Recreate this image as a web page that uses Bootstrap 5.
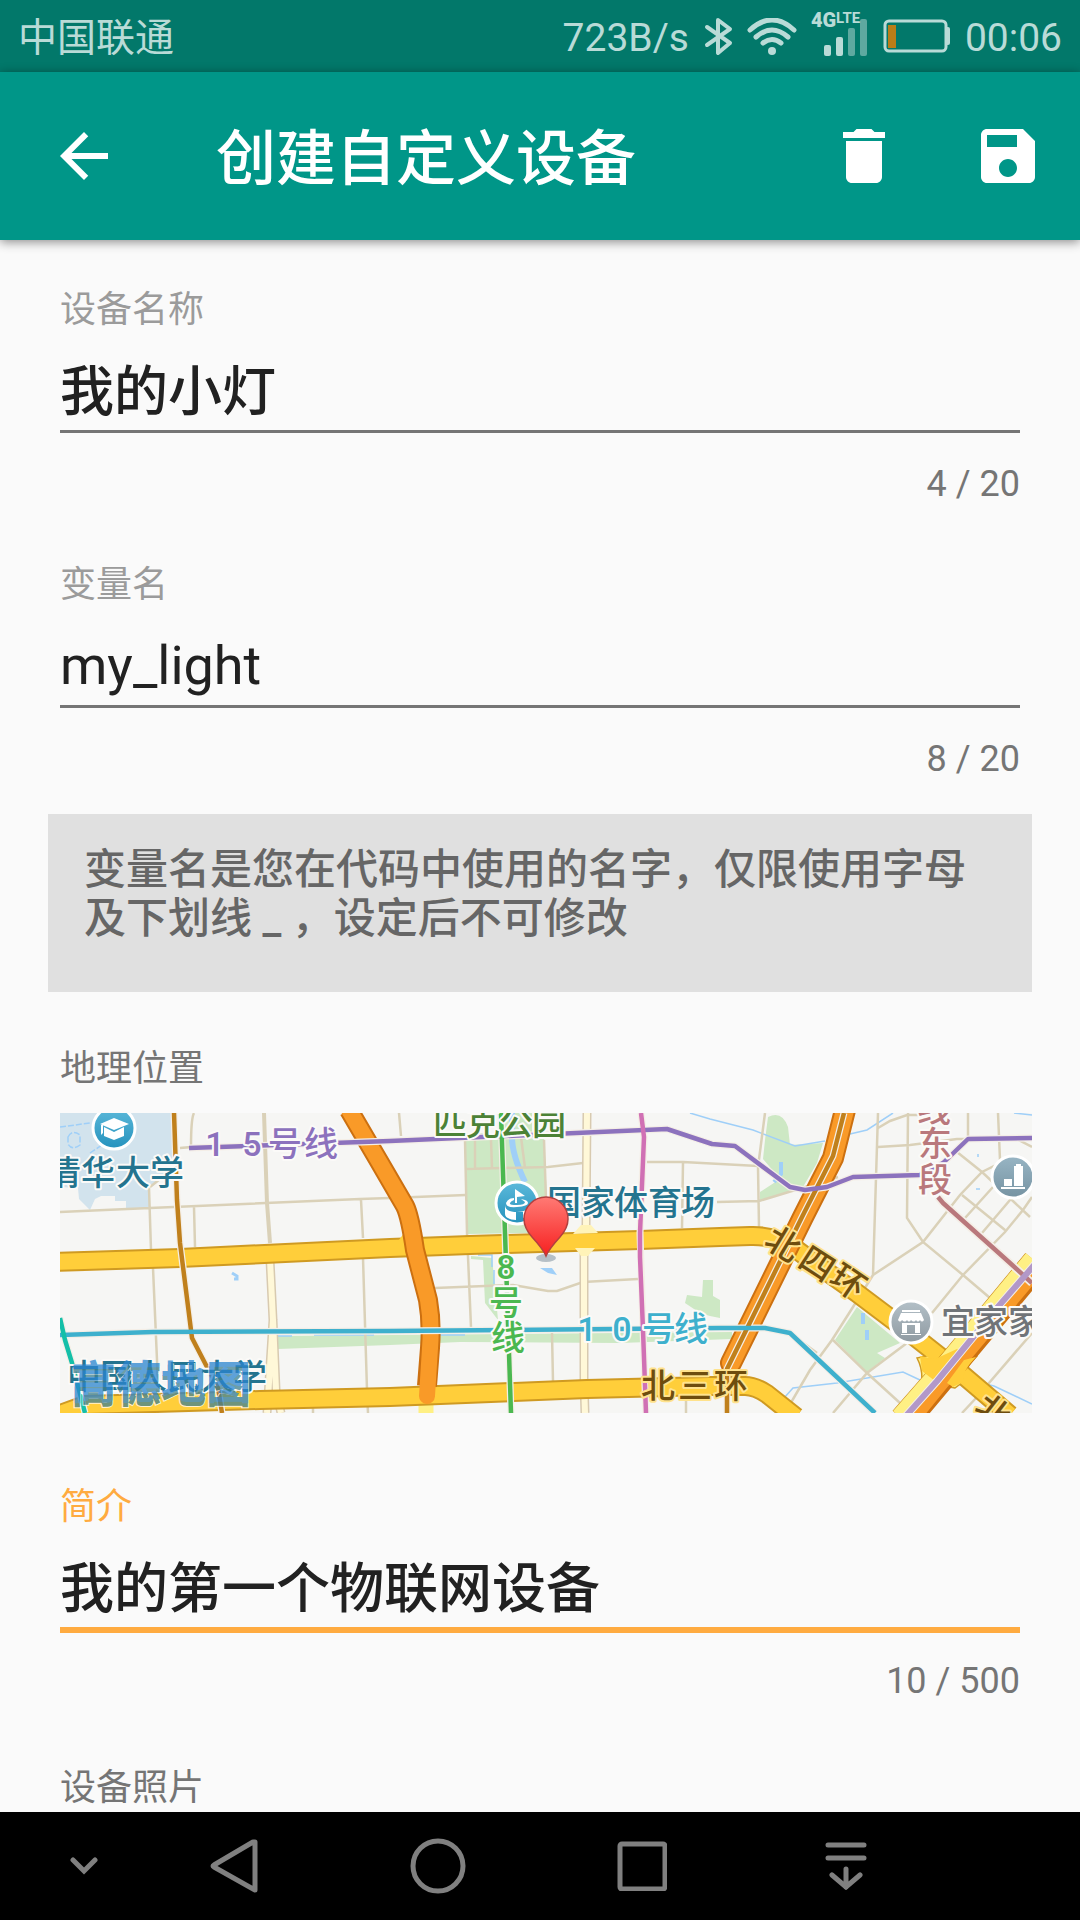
<!DOCTYPE html>
<html lang="zh-CN">
<head>
<meta charset="utf-8">
<meta name="viewport" content="width=device-width, initial-scale=1">
<title>创建自定义设备</title>
<link href="https://cdn.jsdelivr.net/npm/bootstrap@5.3.0/dist/css/bootstrap.min.css" rel="stylesheet">
<style>
  body { font-family: Roboto, "Noto Sans CJK SC", sans-serif; background: #fafafa; color: #212121; }
  svg { display: block; flex: none; }
  .status-bar { height: 72px; padding: 4px 18px 0; background: #02786a; color: #b9dbd7; font-size: 39px; line-height: 68px; }
  .status-icons { gap: 14px; }
  .app-bar { height: 168px; padding: 0 36px 0 48px; background: #009688; color: #fff; box-shadow: 0 2px 10px rgba(0,0,0,.45); z-index: 1; }
  .app-bar h1 { font-size: 60px; font-weight: 500; line-height: 72px; margin-left: 96px; padding-top: 8px; }
  .app-actions { gap: 72px; }
  .icon-btn { width: 72px; height: 72px; padding: 0; border: 0; color: #fff; }
  .form-area { padding: 49px 48px 3px; }
  .field { padding: 0 12px; }
  .caption { display: block; margin: 0; font-size: 36px; line-height: 42px; color: #757575; }
  .field .caption { color: #9b9b9b; }
  .field .line-input { padding: 19px 0 0; border: 0; border-bottom: 3px solid #757575; border-radius: 0; background: none; color: #212121; font-size: 54px; line-height: 80px; height: 102px; }
  .field .line-input:lang(zh) { padding: 16px 0 3px; }
  .field .line-input:focus { box-shadow: none; }
  .field.is-active .caption { color: #ffab40; }
  .field.is-active .line-input { border-color: #ffab40; box-shadow: 0 3px 0 #ffab40; caret-color: transparent; }
  .counter { margin: 30px 0 0; font-size: 36px; line-height: 42px; color: #757575; }
  .gap-field { margin-top: 59px; }
  .hint { margin: 34px 0 56px; padding: 31px 36px 49px; background: #e0e0e0; color: #666; font-size: 42px; line-height: 49px; }
  .map-box { margin: 23px 0 73px 12px; }
  .map-box svg { width: 100%; height: auto; }
  .photo-caption { margin-top: 65px; }
  .nav-keys { display: grid; grid-template-columns: 132fr 204fr 204fr 204fr 204fr 132fr; height: 108px; background: #000; color: #808080; }
  .nav-keys button { height: 108px; padding: 0; border: 0; background: none; color: inherit; }
  .nav-keys .key-side { padding-left: 36px; }
</style>
<script src="https://cdn.jsdelivr.net/npm/bootstrap@5.3.0/dist/js/bootstrap.bundle.min.js"></script>
</head>
<body class="d-flex flex-column min-vh-100">

<div class="status-bar d-flex justify-content-between align-items-center">
  <span>中国联通</span>
  <div class="status-icons d-flex align-items-center">
    <span>723B/s</span>
    <svg width="30" height="40" viewBox="0 0 30 40" fill="none" stroke="currentColor" stroke-width="4" stroke-linejoin="round" stroke-linecap="round"><path d="M4 9 27 25 15 35V2L27 11 4 27"/></svg>
    <svg width="50" height="40" viewBox="0 0 50 40" fill="none" stroke="currentColor" stroke-width="5" stroke-linecap="round"><path d="M3 12Q25-8 47 12M9 19Q25 5 41 19M16 25Q25 18 34 25"/><circle cx="25" cy="33" r="4" fill="currentColor" stroke="none"/></svg>
    <svg width="58" height="56" viewBox="0 0 58 56" fill="currentColor"><text x="0" y="17" font-size="20" font-weight="900">4G</text><text x="25" y="13" font-size="15" font-weight="700">LTE</text><rect x="13" y="35" width="7" height="11" rx="2"/><rect x="25" y="27" width="7" height="19" rx="2"/><g opacity=".5"><rect x="37" y="18" width="7" height="28" rx="2"/><rect x="49" y="9" width="7" height="37" rx="2"/></g></svg>
    <svg width="68" height="38" viewBox="0 0 68 38"><rect x="2" y="2" width="61" height="30" rx="4" fill="none" stroke="currentColor" stroke-width="3"/><path d="M64 8h1q2 0 2 2v14q0 2-2 2h-1z" fill="currentColor"/><path d="M5 6h8v23H5z" fill="#b97d18"/></svg>
    <span>00:06</span>
  </div>
</div>

<header class="app-bar d-flex align-items-center position-relative">
  <button class="icon-btn btn" aria-label="返回"><svg width="72" height="72" viewBox="0 0 24 24" fill="currentColor"><path d="M20 11H7.830l5.590-5.590L12 4l-8 8 8 8 1.410-1.410L7.830 13H20z"/></svg></button>
  <h1 class="mb-0">创建自定义设备</h1>
  <div class="app-actions d-flex ms-auto">
    <button class="icon-btn btn" aria-label="删除"><svg width="72" height="72" viewBox="0 0 24 24" fill="currentColor"><path d="M6 19c0 1.100.9 2 2 2h8c1.100 0 2-.9 2-2V7H6zM19 4h-3.500l-1-1h-5l-1 1H5v2h14z"/></svg></button>
    <button class="icon-btn btn" aria-label="保存"><svg width="72" height="72" viewBox="0 0 24 24" fill="currentColor"><path d="M17 3H5c-1.110 0-2 .9-2 2v14c0 1.100.89 2 2 2h14c1.100 0 2-.9 2-2V7zm-5 16c-1.660 0-3-1.340-3-3s1.340-3 3-3 3 1.340 3 3-1.340 3-3 3zm3-10H5V5h10z"/></svg></button>
  </div>
</header>

<main class="form-area flex-grow-1">
  <div class="field">
    <label class="caption" for="deviceName">设备名称</label>
    <input class="form-control line-input fw-medium" id="deviceName" type="text" value="我的小灯" maxlength="20">
    <p class="counter text-end">4 / 20</p>
  </div>
  <div class="field gap-field">
    <label class="caption" for="varName">变量名</label>
    <input class="form-control line-input" id="varName" lang="en" type="text" value="my_light" maxlength="20">
    <p class="counter text-end">8 / 20</p>
  </div>

  <p class="hint fw-medium">变量名是您在代码中使用的名字，仅限使用字母及下划线 _ ，设定后不可修改</p>

  <div class="px-2"><h2 class="caption fw-normal ms-1">地理位置</h2></div>
  <div class="map-box">
    <svg viewBox="0 0 972 300" role="img" aria-label="地图" font-size="34" font-weight="500">
      <defs>
        <linearGradient id="pinFill" x1="0" y1="0" x2="0" y2="1"><stop offset="0" stop-color="#ff7a74"/><stop offset="1" stop-color="#f72020"/></linearGradient>
        <linearGradient id="poiBlue" x1="0" y1="0" x2="0" y2="1"><stop offset="0" stop-color="#5cb9da"/><stop offset="1" stop-color="#2592bd"/></linearGradient>
        <linearGradient id="poiGray" x1="0" y1="0" x2="0" y2="1"><stop offset="0" stop-color="#b3c0c8"/><stop offset="1" stop-color="#8f9aa1"/></linearGradient>
        <linearGradient id="poiSlate" x1="0" y1="0" x2="0" y2="1"><stop offset="0" stop-color="#98b5c4"/><stop offset="1" stop-color="#7693a2"/></linearGradient>
        <clipPath id="mapClip"><path d="M0 0h972v300H0z"/></clipPath>
      </defs>
      <g clip-path="url(#mapClip)">
      <path d="M0 0h972v300H0z" fill="#f6f6f4"/>
      <!-- campus and parks -->
      <path d="M0 0H113L115 60 90 72 89 95H66V88H55V83H41L35 86 30 97 19 86 18 75 0 74z" fill="#d2e3ed"/>
      <g fill="#cde8c4">
        <path d="M405 20H484L487 88 470 120 408 121z"/>
        <path d="M440 0h32v20h-32zM411 143 432 145 435 174 438 207 425 190 423 147 411 146z"/>
        <path d="M218 223 672 219V226L560 230 400 229 330 232 218 236z"/>
        <path d="M643 167h10v16l7 4v18l-10-2-10-3-15-10 2-8 15 2z"/>
        <path d="M708 4Q722-3 728 14L730 32 763 30 757 50 743 74 700 87V79L720 66 703 46 705 27z"/>
        <path d="M797 194 840 230 817 240 825 245 807 259 775 227z"/>
      </g>
      <g fill="none" stroke="#9fcff8" stroke-width="1.500">
        <path d="M0 14 30 10M8 24q4-8 12-2v10q-8 6-12-1zM30 40l12-8" stroke-dasharray="6 2"/>
        <path d="M172 160l5 3v3h-3" stroke-width="3"/>
        <path d="M452 0V24Q452 42 465 69" stroke-width="6"/>
        <path d="M418 142h14v12M434 157v14M218 223h14M254 222h60M375 222h30"/>
        <path d="M630 0 650 6 693 17 735 33 765 28M790 21 807 17 833 0M724 285 733 275 777 270 843 259 860 267M917 269 934 273 972 291"/>
        <path d="M714 69l7-8v-12M803 200v11M807 217v10" stroke-width="4"/>
        <path d="M918 44v-3M916 76h4M954 0 972 2"/>
      </g>
      <path d="M480 155 492 155 497 162 488 160z" fill="#9fcff8"/>
      <!-- minor streets -->
      <g fill="none" stroke="#dad1b8" stroke-width="2.500">
        <path d="M0 99 90 95 300 86 330 85 406 82M89 75 91 137M93 155 97 247 98 300M90 74 100 66M134 94 135 134M134 0Q131 5 131 34L120 35M301 87 303 125M303 145 307 277 308 300M253 295V300M339 0 341 23"/>
        <path d="M204 0 207 90 210 130" stroke-width="4"/>
        <path d="M405 27 407 120 411 214M415 27 415 57M431 27 432 55M461 24 465 55M484 27 486 87M405 56 443 55 488 54 523 50M375 175 453 172 488 178 497 178 523 169 578 166"/>
        <path d="M587 49 623 49 698 53M623 49 622 115M492 220 493 269M626 287V300M705 0 698 54 699 114M657 89 699 88 778 64"/>
        <path d="M818 0 813 162 793 194 772 227 750 257 725 300M818 15 830 8 847 2H858M848 0 847 105 863 129 903 162 930 185M818 34 850 32 897 26H908M813 162 863 129 900 82 922 59 940 50"/>
        <path d="M908 0V25M938 0 940 47M897 39 922 59 970 104M872 200 903 162 945 119 963 97 972 84M902 82 945 117M905 105 933 74M922 120 950 87M953 24 972 34"/>
        <path d="M773 227 807 260 840 290M773 300 807 260 847 230M730 220 757 240M972 220 917 284 902 300"/>
      </g>
      <!-- secondary roads -->
      <g fill="none" stroke="#d8cab0" stroke-width="9"><path d="M527 0 526 114 524 137V269L525 300M210 147 213 207 207 300M213 207 216 277 221 300"/></g>
      <g fill="none" stroke="#fff8d8" stroke-width="6"><path d="M527 0 526 114 524 137V269L525 300M210 147 213 207 207 300M213 207 216 277 221 300"/></g>
      <path d="M366 285V300" stroke="#fff084" stroke-width="15"/>
      <!-- ring roads -->
      <g fill="none" stroke="#cf9a22" stroke-width="20">
        <path d="M-5 149 120 145 330 135 410 132 580 127 660 124 690 123Q715 122 737 137L760 154 797 180 850 220 897 257 950 302"/>
        <path d="M-8 304 25 292 200 287 330 284 527 276 650 273 685 273Q695 273 707 281L736 304"/>
      </g>
      <path d="M835 304 848 290 861 275Q864 258 857 245L880 240Q890 236 897 231L917 243Q902 258 903 269L895 275Q884 272 876 281L858 304z" fill="#fff084" stroke="#cf9a22" stroke-width="1.500"/>
      <g fill="none" stroke="#ffce3a" stroke-width="16">
        <path d="M-5 149 120 145 330 135 410 132 580 127 660 124 690 123Q715 122 737 137L760 154 797 180 850 220 897 257 950 302"/>
        <path d="M-8 304 25 292 200 287 330 284 527 276 650 273 685 273Q695 273 707 281L736 304"/>
      </g>
      <path d="M513 121 521 112H531L538 120zM515 135H535L528 143H521z" fill="#fff3b8"/>
      <path d="M339 127l5-7h16l4 7v15l-16 3z" fill="#ffce3a"/>
      <!-- expressways -->
      <g fill="none" stroke-linejoin="round">
        <path d="M289-3 320 50 345 93Q350 103 355 137L368 187Q372 210 370 235L367 273" stroke="#cc7010" stroke-width="20"/>
        <path d="M289-3 320 50 345 93Q350 103 355 137L368 187Q372 210 370 235L367 283" stroke="#f99a28" stroke-width="16" stroke-linecap="round"/>
        <path d="M785-3 773 45 743 104 671 250" stroke="#cc7010" stroke-width="22" stroke-linecap="round"/>
        <path d="M785-3 773 45 743 104 671 250" stroke="#f99a28" stroke-width="18" stroke-linecap="round"/>
        <path d="M842 306 877 266 937 194 975 148" stroke="#cc8a18" stroke-width="25"/>
        <path d="M841 305 876 265 936 193 974 147" stroke="#fff084" stroke-width="21"/>
        <path d="M855 306 882 274 943 201 979 158" stroke="#cc7010" stroke-width="15"/>
        <path d="M854 305 880 273 941 200 978 156" stroke="#f99a28" stroke-width="13"/>
        <path d="M860 243 875 246 897 236 903 240 875 268 862 258z" fill="#ffce3a"/>
        <path d="M904 247 916 244Q902 258 903 269L893 274 887 270z" fill="#ffce3a"/>
      </g>
      <!-- metro lines: pale casing under each coloured line -->
      <g fill="none" stroke-linejoin="round" stroke="#f4eee6" stroke-width="7">
        <path d="M114 0 117 87 120 130 132 225 147 254 158 275 162 300M784 0 773 43 743 102 667 256V300"/>
        <path d="M129 35 330 28 607 16 652 31 675 33 730 74 745 77 767 74 793 64 860 62 883 50 908 26 972 25"/>
        <path d="M0 222 93 219 330 218 660 215 705 215 730 220 815 300M441 0 445 120 451 300M581 0 584 24 580 120 583 217 586 300M0 205 5 227 12 250 25 300"/>
        <path d="M878 84 883 90 950 150 972 170M845 304 877 268 937 195 976 150" stroke-width="8"/>
      </g>
      <g fill="none" stroke-linejoin="round" stroke-width="4.500">
        <path d="M114 0 117 87 120 130 132 225 147 254 158 275 162 300M784 0 773 43 743 102 667 256V300" stroke="#c0801c"/>
        <path d="M129 35 330 28 607 16 652 31 675 33 730 74 745 77 767 74 793 64 860 62 883 50 908 26 972 25" stroke="#8c72bd"/>
        <path d="M0 222 93 219 330 218 660 215 705 215 730 220 815 300" stroke="#3eb0cd"/>
        <path d="M441 0 445 120 451 300" stroke="#4bb850"/>
        <path d="M581 0 584 24 580 120 580 144 583 217 586 300" stroke="#d070b4"/>
        <path d="M0 205 5 227 12 250 25 300" stroke="#14bfa8"/>
        <path d="M878 84 883 90 950 150 972 170" stroke="#b9787c"/>
        <path d="M845 304 877 268 937 195 976 150" stroke="#b298c8" stroke-width="6"/>
      </g>
      <!-- points of interest -->
      <g stroke="#fff" stroke-width="3">
        <circle cx="54" cy="15" r="21" fill="url(#poiBlue)"/>
        <circle cx="457" cy="90" r="21" fill="url(#poiBlue)"/>
        <circle cx="953" cy="64" r="21" fill="url(#poiSlate)"/>
        <circle cx="851" cy="209" r="21" fill="url(#poiGray)"/>
      </g>
      <g fill="#fff">
        <path d="M54 5 69 11 54 17 40 11zM44 14 54 19 64 14V23L54 27 44 23zM41 12h2v8l-2 2z"/>
        <path d="M455 76 465 83 457 84V90h-2zM445 92q0 7 12 7t12-7v9q-3 3-6 4v-6h-7v8q-11-1-11-6zM446 90q2-5 8-5v2q-3 1-4 3t7 2 8-3l-4-3q7 1 7 4t-11 4-11-4z"/>
        <path d="M954 53h2v-2h5v2h2v20h-9zM944 66h8v7h-8zM941 74h24v2h-24z"/>
        <path d="M842 197h18v2h-18zM841 200h20l3 7q-2 3-4 0-2 3-4 0-2 3-5 0-2 3-4 0-2 3-5 0-2 3-4 0zM842 210h18v10h-5v-8h-8v8h-5zM841 221h20v1h-20z"/>
      </g>
      <!-- map labels -->
      <g stroke="#fbfaf8" stroke-width="4" stroke-linejoin="round" paint-order="stroke" text-anchor="middle">
        <text x="4 38 73 107" y="72" fill="#24748f">清华大学</text>
        <text x="390 423 456 489" y="22" fill="#4c8236">匹克公园</text>
        <text x="504 538 571 605 638" y="102" fill="#24748f">国家体育场</text>
        <text x="155 192 225 261" y="43" fill="#8c72bd">15号线</text>
        <text x="446 446 448" y="166 202 237" fill="#4bb850">8号线</text>
        <text x="527 562 599 631" y="228" fill="#3eb0cd">10号线</text>
        <text x="874 875 875" y="9 43 79" fill="#b9787c">线东段</text>
        <text x="898 931 965" y="221" fill="#707478">宜家家</text>
        <text x="24 57 90 124 157 190" y="276" fill="#24748f">中国人民大学</text>
        <g stroke="#ffe28c" fill="#6e4d0e">
          <text x="598 635 671" y="285">北三环</text>
          <text transform="translate(723 131) rotate(31)" y="12">北</text>
          <text transform="translate(757 151) rotate(33)" y="12">四</text>
          <text transform="translate(788 169) rotate(34)" y="12">环</text>
          <text transform="translate(933 299) rotate(38)" y="12">北</text>
        </g>
      </g>
      <g font-size="45" font-weight="700" opacity=".75" stroke="#fff" stroke-width="2" paint-order="stroke">
        <text x="11" y="290" fill="#3f8191">高德地图</text>
        <text x="11" y="286" fill="#2b85cf" stroke="none">高德地图</text>
      </g>
      <!-- location pin -->
      <ellipse cx="486" cy="145" rx="10" ry="4" fill="#b5bfc6"/>
      <path d="M486 143Q483 136 472 124 464 115 464 106A22 22 0 0 1 508 106Q508 115 500 124 489 136 486 143z" fill="url(#pinFill)" stroke="#b3403f" stroke-width="1.500"/>
      </g>
    </svg>
  </div>

  <div class="field is-active">
    <label class="caption" for="intro">简介</label>
    <input class="form-control line-input fw-medium" id="intro" type="text" value="我的第一个物联网设备" maxlength="500">
    <p class="counter text-end">10 / 500</p>
  </div>

  <div class="px-2 photo-caption"><h2 class="caption fw-normal ms-1">设备照片</h2></div>
</main>

<nav class="nav-keys">
  <button class="key-side d-flex align-items-center justify-content-center" aria-label="收起"><svg width="28" height="18" viewBox="0 0 28 18" fill="none" stroke="currentColor" stroke-width="5" stroke-linecap="round"><path d="M3 3 14 14 25 3"/></svg></button>
  <button class="key-main d-flex align-items-center justify-content-center" aria-label="后退"><svg width="48" height="54" viewBox="0 0 48 54" fill="none" stroke="currentColor" stroke-width="5" stroke-linejoin="round"><path d="M45 3V51L4 28q-2-1 0-2L43 3z"/></svg></button>
  <button class="key-main d-flex align-items-center justify-content-center" aria-label="主屏幕"><svg width="56" height="56" viewBox="0 0 56 56" fill="none" stroke="currentColor" stroke-width="5"><circle cx="28" cy="28" r="25"/></svg></button>
  <button class="key-main d-flex align-items-center justify-content-center" aria-label="最近任务"><svg width="50" height="50" viewBox="0 0 50 50" fill="none" stroke="currentColor" stroke-width="5"><rect x="3" y="3" width="45" height="45" rx="2"/></svg></button>
  <button class="key-main d-flex align-items-center justify-content-center" aria-label="通知栏"><svg width="42" height="48" viewBox="0 0 42 48" fill="none" stroke="currentColor" stroke-width="5" stroke-linecap="round"><path d="M3 3H39M3 16H39M21 27V45M7 33 21 45 35 33"/></svg></button>
</nav>
</body>
</html>
